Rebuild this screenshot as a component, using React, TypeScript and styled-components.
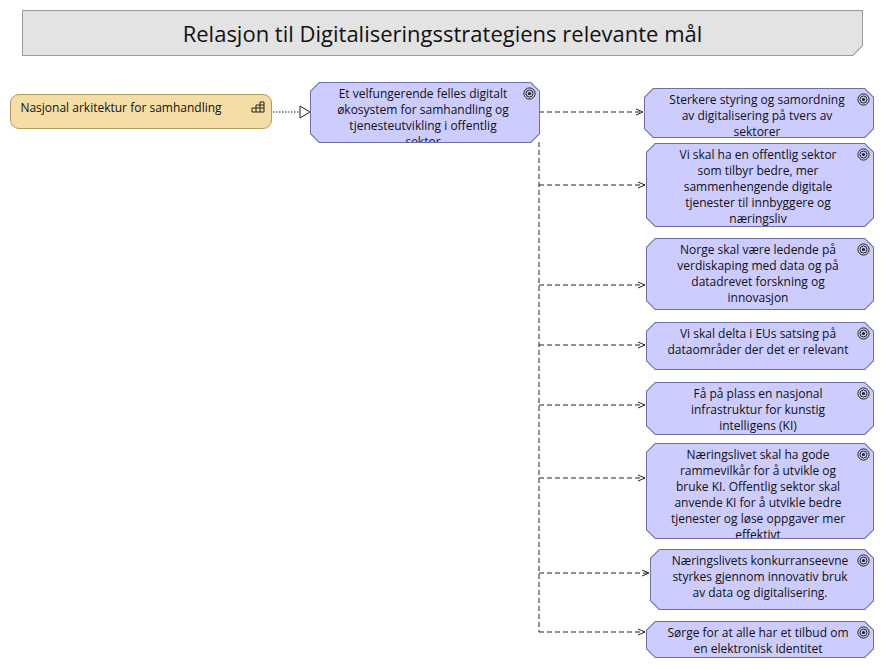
import styled, { createGlobalStyle } from 'styled-components';

const Global = createGlobalStyle`
  body { margin: 0; background: #fff; font-family: "Open Sans", "Noto Sans", sans-serif; }
`;

const Canvas = styled.div`
  position: relative;
  width: 885px;
  height: 669px;
  overflow: hidden;
`;

const oct = (c: number) =>
  `polygon(${c}px 0, calc(100% - ${c}px) 0, 100% ${c}px, 100% calc(100% - ${c}px), calc(100% - ${c}px) 100%, ${c}px 100%, 0 calc(100% - ${c}px), 0 ${c}px)`;

const TitleOuter = styled.div`
  position: absolute;
  left: 22px;
  top: 10px;
  width: 841px;
  height: 46px;
  background: #9a9a9a;
  clip-path: polygon(0 0, 100% 0, 100% calc(100% - 10px), calc(100% - 10px) 100%, 0 100%);
`;

const TitleInner = styled.div`
  position: absolute;
  inset: 1px;
  background: #e3e3e3;
  clip-path: polygon(0 0, 100% 0, 100% calc(100% - 9.6px), calc(100% - 9.6px) 100%, 0 100%);
  display: flex;
  align-items: center;
  justify-content: center;
  font-size: 22px;
  color: #111;
`;

const Capability = styled.div`
  position: absolute;
  left: 10px;
  top: 94px;
  width: 262px;
  height: 35px;
  background: #f5dea6;
  border: 1px solid #b49a5c;
  border-radius: 9px;
  font-size: 12px;
  color: #111;
  display: flex;
  justify-content: center;
  padding-top: 4px;
  box-sizing: border-box;
  padding-right: 40px;
`;

const CapIcon = styled.svg`
  position: absolute;
  right: 6px;
  top: 6px;
`;

const GoalOuter = styled.div`
  position: absolute;
  background: #6e6ea8;
  clip-path: ${oct(9)};
`;

const GoalInner = styled.div`
  position: absolute;
  inset: 1px;
  background: #ccccff;
  clip-path: ${oct(8.6)};
  font-size: 12px;
  line-height: 16px;
  color: #111;
  text-align: center;
  padding: 3px 24px 0 20px;
  box-sizing: border-box;
`;

const GoalIcon = styled.svg`
  position: absolute;
  right: 4px;
  top: 5px;
`;

const Lines = styled.svg`
  position: absolute;
  left: 0;
  top: 0;
`;

const goals = [
  { x: 644, y: 88, w: 230, h: 50, t: 'Sterkere styring og samordning av digitalisering på tvers av sektorer', ay: 112 },
  { x: 646, y: 143, w: 228, h: 84, t: 'Vi skal ha en offentlig sektor som tilbyr bedre, mer sammenhengende digitale tjenester til innbyggere og næringsliv', ay: 185 },
  { x: 646, y: 238, w: 228, h: 72, t: 'Norge skal være ledende på verdiskaping med data og på datadrevet forskning og innovasjon', ay: 285 },
  { x: 646, y: 322, w: 228, h: 48, t: 'Vi skal delta i EUs satsing på dataområder der det er relevant', ay: 345 },
  { x: 646, y: 382, w: 228, h: 53, t: 'Få på plass en nasjonal infrastruktur for kunstig intelligens (KI)', ay: 405 },
  { x: 646, y: 443, w: 228, h: 96, t: 'Næringslivet skal ha gode rammevilkår for å utvikle og bruke KI. Offentlig sektor skal anvende KI for å utvikle bedre tjenester og løse oppgaver mer effektivt', ay: 478 },
  { x: 650, y: 549, w: 224, h: 61, t: 'Næringslivets konkurranseevne styrkes gjennom innovativ bruk av data og digitalisering.', ay: 573 },
  { x: 646, y: 621, w: 228, h: 37, t: 'Sørge for at alle har et tilbud om en elektronisk identitet', ay: 632 },
];

const Target = () => (
  <GoalIcon width="13" height="13" viewBox="0 0 13 13">
    <circle cx="6.5" cy="6.5" r="5.6" fill="none" stroke="#222" strokeWidth="1" />
    <circle cx="6.5" cy="6.5" r="3.5" fill="none" stroke="#222" strokeWidth="1" />
    <circle cx="6.5" cy="6.5" r="1.6" fill="#222" />
  </GoalIcon>
);

const Goal = ({ x, y, w, h, t }: { x: number; y: number; w: number; h: number; t: string }) => (
  <GoalOuter style={{ left: x, top: y, width: w, height: h }}>
    <GoalInner>{t}</GoalInner>
    <Target />
  </GoalOuter>
);

export default function App() {
  return (
    <Canvas>
      <Global />
      <TitleOuter>
        <TitleInner>Relasjon til Digitaliseringsstrategiens relevante mål</TitleInner>
      </TitleOuter>

      <Lines width="885" height="669">
        <line x1="273" y1="112" x2="300" y2="112" stroke="#222" strokeDasharray="1.5 1.5" />
        <polygon points="300,106 310,112 300,118" fill="#fff" stroke="#222" />
        <line x1="539" y1="142" x2="539" y2="632" stroke="#222" strokeDasharray="5 3" />
        {goals.map((g, i) => (
          <g key={i}>
            <line x1="539" y1={g.ay} x2={g.x - 1} y2={g.ay} stroke="#222" strokeDasharray="5 3" />
            <polyline points={`${g.x - 8},${g.ay - 3} ${g.x - 1},${g.ay} ${g.x - 8},${g.ay + 3}`} fill="none" stroke="#222" />
          </g>
        ))}
      </Lines>

      <Capability>
        Nasjonal arkitektur for samhandling
        <CapIcon width="14" height="12" viewBox="0 0 14 12">
          <path d="M9 1h4v10H1V7h4V4h4V1M5 7h8M9 4h4M5 7v4M9 4v7" fill="none" stroke="#222" strokeWidth="1" />
        </CapIcon>
      </Capability>

      <Goal x={310} y={82} w={230} h={61} t="Et velfungerende felles digitalt økosystem for samhandling og tjenesteutvikling i offentlig sektor" />
      {goals.map((g, i) => (
        <Goal key={i} {...g} />
      ))}
    </Canvas>
  );
}
